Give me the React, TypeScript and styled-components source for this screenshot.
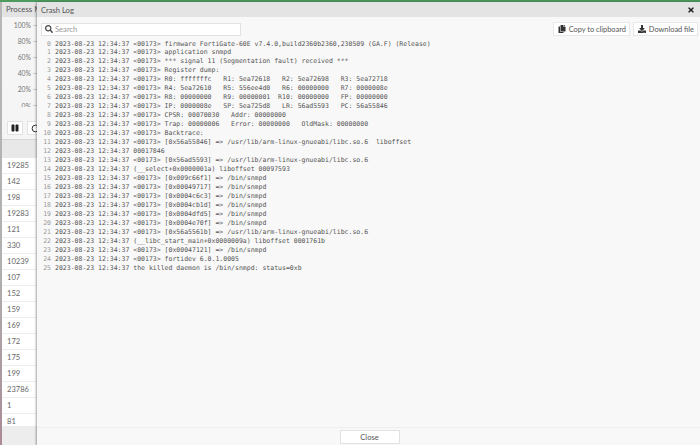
import styled, { createGlobalStyle } from 'styled-components';
import { RotateCw } from 'lucide-react';
import { FaCopy, FaDownload, FaPause, FaSearch, FaTimes } from 'react-icons/fa';

const Global = createGlobalStyle`
  html, body {
    margin: 0;
    padding: 0;
    width: 700px;
    height: 445px;
    overflow: hidden;
    background: #fff;
    font-family: 'Lato', 'Liberation Sans', sans-serif;
  }
`;

const Page = styled.div`
  display: flex;
  flex-direction: column;
  width: 700px;
  height: 445px;
  overflow: hidden;
`;
const GreenBar = styled.div`
  flex: none;
  height: 2px;
  background: #4c9a5d;
`;
const Body = styled.div`
  flex: 1;
  min-height: 0;
  display: flex;
`;
const BackPane = styled.div`
  flex: none;
  width: 37px;
  display: flex;
  overflow: hidden;
`;
const SideEdge = styled.div`
  flex: none;
  width: 2px;
  background: linear-gradient(180deg, #b8b8b8 0%, #b0b0b0 60%, #a98a96 100%);
`;
const BackContent = styled.div`
  flex: 1;
  min-width: 0;
  display: flex;
  flex-direction: column;
  background: #ededed;
  overflow: hidden;
  white-space: nowrap;
`;
const BackTitle = styled.div`
  flex: none;
  height: 15px;
  padding-left: 4px;
  background: #e3e3e3;
  font-size: 7.8px;
  line-height: 15px;
  color: #555;
  overflow: hidden;
`;
const Chart = styled.div`
  flex: none;
  height: 90px;
  display: flex;
  flex-direction: column;
  align-items: flex-end;
  background: #f5f5f5;
`;
const Tick = styled.div`
  flex: none;
  display: flex;
  align-items: center;
  gap: 2px;
  height: 16.1px;
  font-size: 6.8px;
  line-height: 14px;
  color: #777;
  &::after {
    content: '';
    width: 4px;
    height: 1px;
    background: #ccc;
  }
`;
const ChartControls = styled.div`
  flex: none;
  height: 33px;
  display: flex;
  align-items: flex-start;
  gap: 4px;
  padding: 14px 0 0 5px;
  box-sizing: border-box;
  background: #f5f5f5;
  border-bottom: 1px solid #d8d8d8;
`;
const SmallButton = styled.div`
  flex: none;
  width: 16px;
  height: 14px;
  box-sizing: border-box;
  display: flex;
  align-items: center;
  justify-content: center;
  background: #fff;
  border: 1px solid #e2e2e2;
  color: #222;
`;
const TableHead = styled.div`
  flex: none;
  height: 18px;
  background: #e8e8e8;
`;
const Table = styled.div`
  flex: none;
  height: 268px;
  overflow: hidden;
  background: #fff;
`;
const Cell = styled.div`
  height: 16px;
  box-sizing: border-box;
  padding-left: 5px;
  border-bottom: 1px solid #eee;
  font-size: 7.6px;
  line-height: 15px;
  color: #666;
`;

const Modal = styled.div`
  position: relative;
  flex: 1;
  min-width: 0;
  display: flex;
  flex-direction: column;
  background: #f8f8f8;
  box-shadow: -1px 0 2px rgba(0, 0, 0, 0.35);
`;
const Header = styled.div`
  flex: none;
  height: 15px;
  display: flex;
  align-items: center;
  justify-content: space-between;
  padding: 0 5px 0 4px;
  background: #e4e4e4;
`;
const Title = styled.span`
  font-size: 7.6px;
  color: #555;
`;
const CloseIcon = styled(FaTimes)`
  color: #222;
`;
const Toolbar = styled.div`
  flex: none;
  display: flex;
  align-items: center;
  justify-content: space-between;
  padding: 5px 2px 0 4px;
`;
const SearchField = styled.div`
  width: 200px;
  height: 13px;
  display: flex;
  align-items: center;
  gap: 2px;
  padding-left: 3px;
  box-sizing: border-box;
  background: #fff;
  border: 1px solid #e2e2e2;
  font-size: 7.6px;
  color: #999;
`;
const SearchIcon = styled(FaSearch)`
  color: #444;
`;
const Actions = styled.div`
  display: flex;
  gap: 3px;
`;
const ActionButton = styled.div`
  height: 14px;
  display: flex;
  align-items: center;
  gap: 3px;
  padding: 0 3px 0 4px;
  box-sizing: border-box;
  background: #fff;
  border: 1px solid #e8e8e8;
  font-size: 7.4px;
  color: #555;
`;
const ActionIcon = styled.span`
  display: flex;
  color: #333;
`;
const LogArea = styled.div`
  flex: 1;
  min-height: 0;
  padding: 3.5px 0 0 4px;
  font-family: 'DejaVu Sans Mono', 'Liberation Mono', monospace;
  font-size: 6.5px;
  line-height: 8.97px;
  color: #555;
`;
const LogRow = styled.div`
  display: flex;
  white-space: pre;
`;
const LineNo = styled.span`
  flex: none;
  width: 14px;
  text-align: right;
  padding-right: 4px;
  box-sizing: border-box;
  color: #999;
`;
const Footer = styled.div`
  flex: none;
  height: 18px;
  display: flex;
  justify-content: center;
  align-items: flex-start;
  padding: 2px 0 0 2px;
  box-sizing: border-box;
  border-top: 1px solid #eee;
`;
const CloseButton = styled.div`
  width: 60px;
  height: 14px;
  box-sizing: border-box;
  background: #fff;
  border: 1px solid #e2e2e2;
  text-align: center;
  font-size: 7.6px;
  line-height: 12px;
  color: #555;
`;

const STAMP = '2023-08-23 12:34:37';
const P = `${STAMP} <00173> `;
const LOG = [
  `${P}firmware FortiGate-60E v7.4.0,build2360b2360,230509 (GA.F) (Release)`,
  `${P}application snmpd`,
  `${P}*** signal 11 (Segmentation fault) received ***`,
  `${P}Register dump:`,
  `${P}R0: fffffffc   R1: 5ea72618   R2: 5ea72698   R3: 5ea72718`,
  `${P}R4: 5ea72610   R5: 556ee4d0   R6: 00000000   R7: 0000008e`,
  `${P}R8: 00000000   R9: 00000001  R10: 00000000   FP: 00000000`,
  `${P}IP: 0000008e   SP: 5ea725d8   LR: 56ad5593   PC: 56a55846`,
  `${P}CPSR: 00070030   Addr: 00000000`,
  `${P}Trap: 00000006   Error: 00000000   OldMask: 00000000`,
  `${P}Backtrace:`,
  `${P}[0x56a55846] => /usr/lib/arm-linux-gnueabi/libc.so.6  liboffset`,
  `${STAMP} 00017846`,
  `${P}[0x56ad5593] => /usr/lib/arm-linux-gnueabi/libc.so.6`,
  `${STAMP} (__select+0x0000001a) liboffset 00097593`,
  `${P}[0x009c66f1] => /bin/snmpd`,
  `${P}[0x00049717] => /bin/snmpd`,
  `${P}[0x0004c6c3] => /bin/snmpd`,
  `${P}[0x0004cb1d] => /bin/snmpd`,
  `${P}[0x0004dfd5] => /bin/snmpd`,
  `${P}[0x0004e70f] => /bin/snmpd`,
  `${P}[0x56a5561b] => /usr/lib/arm-linux-gnueabi/libc.so.6`,
  `${STAMP} (__libc_start_main+0x0000009a) liboffset 0001761b`,
  `${P}[0x00047121] => /bin/snmpd`,
  `${P}fortidev 6.0.1.0005`,
  `${STAMP} the killed daemon is /bin/snmpd: status=0xb`,
];
const TICKS = ['100%', '80%', '60%', '40%', '20%', '0%'];
const PIDS = ['19285', '142', '198', '19283', '121', '330', '10239', '107', '152', '159', '169', '172', '175', '199', '23786', '1', '81'];

export default function App() {
  return (
    <Page>
      <Global />
      <GreenBar />
      <Body>
        <BackPane>
          <SideEdge />
          <BackContent>
            <BackTitle>Process Monitor</BackTitle>
            <Chart>
              {TICKS.map((t) => (
                <Tick key={t}>{t}</Tick>
              ))}
            </Chart>
            <ChartControls>
              <SmallButton>
                <FaPause size={8} />
              </SmallButton>
              <SmallButton>
                <RotateCw size={9} strokeWidth={2.5} />
              </SmallButton>
            </ChartControls>
            <TableHead />
            <Table>
              {PIDS.map((p) => (
                <Cell key={p}>{p}</Cell>
              ))}
            </Table>
          </BackContent>
        </BackPane>
        <Modal>
          <Header>
            <Title>Crash Log</Title>
            <CloseIcon size={8} />
          </Header>
          <Toolbar>
            <SearchField>
              <SearchIcon size={8} />
              Search
            </SearchField>
            <Actions>
              <ActionButton>
                <ActionIcon>
                  <FaCopy size={8} />
                </ActionIcon>
                Copy to clipboard
              </ActionButton>
              <ActionButton>
                <ActionIcon>
                  <FaDownload size={8} />
                </ActionIcon>
                Download file
              </ActionButton>
            </Actions>
          </Toolbar>
          <LogArea>
            {LOG.map((line, i) => (
              <LogRow key={i}>
                <LineNo>{i}</LineNo>
                {line}
              </LogRow>
            ))}
          </LogArea>
          <Footer>
            <CloseButton>Close</CloseButton>
          </Footer>
        </Modal>
      </Body>
    </Page>
  );
}
